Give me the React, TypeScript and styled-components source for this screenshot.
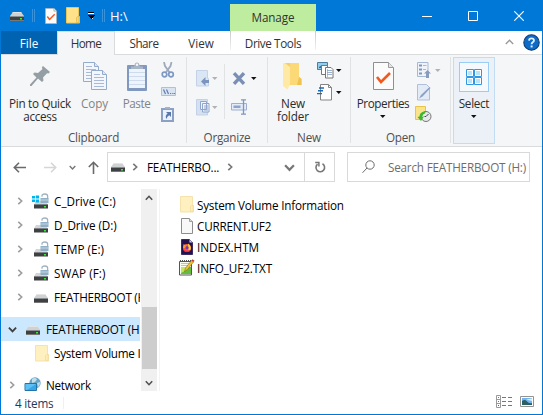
import React from 'react';
import styled, { createGlobalStyle, css } from 'styled-components';

const GlobalStyle = createGlobalStyle`
  * { box-sizing: border-box; }
  html, body { margin: 0; background: #fff; }
  body { width: 543px; height: 415px; overflow: hidden; }
  svg { display: block; flex: none; }
`;

/* ---------- shared parts ---------- */

const Window = styled.div`
  width: 543px;
  height: 415px;
  display: flex;
  flex-direction: column;
  border: 1px solid #0078d7;
  border-top: 0;
  background: #fff;
  color: #000;
  font-family: 'Open Sans', 'Noto Sans', sans-serif;
  font-size: 11.7px;
  white-space: nowrap;
  cursor: default;
`;

const Text = styled.span<{ $track?: number }>`
  display: block;
  flex: none;
  text-align: center;
  letter-spacing: ${p => p.$track ?? 0}px;
`;

/* ---------- title bar ---------- */

const TitleBar = styled.header`
  height: 31px;
  flex: none;
  display: flex;
  background: #0078d7;
  color: #fff;
`;

const QuickAccess = styled.div`
  width: 229px;
  height: 31px;
  display: flex;
  align-items: center;
  padding-left: 9px;
`;

const QuickItem = styled.div<{ $width: number }>`
  width: ${p => p.$width}px;
  display: flex;
  align-items: center;
`;

const QuickDivider = styled.i`
  width: 3px;
  height: 13px;
  border: 1px solid #3a92da;
  border-width: 0 1px;
  background: #1a6dba;
`;

const Caption = styled.span`
  font-size: 13px;
  line-height: 16px;
`;

const ContextTab = styled.div`
  width: 86px;
  height: 27px;
  margin-top: 4px;
  display: flex;
  justify-content: center;
  background: #bfed9f;
  color: #333;
  line-height: 27px;
`;

const WindowControls = styled.div`
  flex: 1;
  display: flex;
  justify-content: flex-end;
`;

const ControlButton = styled.button`
  width: 46px;
  height: 31px;
  padding: 0;
  border: 0;
  display: grid;
  place-items: center;
  background: none;
`;

/* ---------- ribbon tabs ---------- */

const TabRow = styled.nav`
  height: 24px;
  flex: none;
  display: flex;
  color: #333;
  box-shadow: inset 0 -1px #dadbdc;
`;

const Tab = styled.div<{ $width: number; $kind?: 'file' | 'active' | 'context' }>`
  width: ${p => p.$width}px;
  height: 24px;
  display: flex;
  justify-content: center;
  line-height: 24px;
  ${p => p.$kind === 'file' && css`
    height: 23px;
    background: #0063b1;
    color: #fff;
  `}
  ${p => p.$kind === 'active' && css`
    border: 1px solid #dadbdc;
    border-bottom: 0;
    line-height: 22px;
    background: #f5f6f7;
  `}
  ${p => p.$kind === 'context' && css`
    height: 19px;
    margin-left: 1px;
    border: 1px solid;
    border-width: 0 1px;
    border-image: linear-gradient(#c8c8c8, #f4f4f4) 1;
  `}
`;

const TabTools = styled.div`
  flex: 1;
  display: flex;
  justify-content: flex-end;
  align-items: center;
  gap: 9px;
  padding: 0 2px 2px 0;
`;

/* ---------- ribbon ---------- */

const Ribbon = styled.section`
  height: 92px;
  flex: none;
  display: flex;
  padding-top: 2px;
  border-bottom: 1px solid #dadbdc;
  background: #f5f6f7;
  color: #2b2b2b;
`;

const Group = styled.div<{ $width: number }>`
  width: ${p => p.$width}px;
  height: 86px;
  display: flex;
  flex-direction: column;
  border-right: 1px solid #e1e2e4;
`;

const GroupBody = styled.div<{ $pad: number }>`
  height: 73px;
  flex: none;
  display: flex;
  padding-left: ${p => p.$pad}px;
`;

const GroupLabel = styled.div`
  display: flex;
  justify-content: center;
  line-height: 14px;
  color: #505050;
`;

const BigButton = styled.div<{ $width: number; $disabled?: boolean }>`
  width: ${p => p.$width}px;
  display: flex;
  flex-direction: column;
  align-items: center;
  line-height: 13px;
  color: ${p => (p.$disabled ? '#838383' : '#2b2b2b')};
`;

const BigIcon = styled.div`
  height: 40px;
  display: flex;
  align-items: center;
  padding-bottom: 2px;
`;

const CaretSlot = styled.div`
  height: 13px;
  display: flex;
  align-items: center;
`;

const SmallColumn = styled.div<{ $left?: number; $top?: number; $gap?: number }>`
  display: flex;
  flex-direction: column;
  gap: ${p => p.$gap ?? 6}px;
  padding-top: ${p => p.$top ?? 5}px;
  margin-left: ${p => p.$left ?? 0}px;
`;

const SmallButton = styled.div`
  height: 16px;
  display: flex;
  align-items: center;
  gap: 2px;
`;

const InnerRule = styled.i`
  width: 1px;
  height: 55px;
  margin: 7px 6px 0 6px;
  background: #e1e2e4;
`;

const SelectGroup = styled.div`
  width: 42px;
  height: 87px;
  margin-left: 2px;
  display: flex;
  flex-direction: column;
  align-items: center;
  border: 1px solid #c2dcf3;
  padding-top: 4px;
  background: #ebf1f6;
  line-height: 13px;
`;

const SelectTile = styled.div`
  width: 30px;
  height: 30px;
  margin-bottom: 5px;
  display: grid;
  place-items: center;
  border: 1px solid #99cdf5;
  background: #f5f9fc;
`;

/* ---------- navigation ---------- */

const NavBar = styled.div`
  height: 42px;
  flex: none;
  display: flex;
  padding-top: 5px;
`;

const NavButtons = styled.div`
  width: 106px;
  height: 31px;
  display: flex;
  align-items: center;
  padding-left: 12px;
`;

const NavButton = styled.div<{ $width: number }>`
  width: ${p => p.$width}px;
`;

const AddressBox = styled.div`
  width: 228px;
  height: 30px;
  display: flex;
  align-items: center;
  border: 1px solid #d9d9d9;
  padding-left: 3px;
`;

const Crumb = styled.div<{ $width: number }>`
  width: ${p => p.$width}px;
  display: flex;
  align-items: center;
`;

const RefreshCell = styled.div`
  flex: 1;
  height: 28px;
  display: grid;
  place-items: center;
  border-left: 1px solid #d9d9d9;
`;

const SearchBox = styled.div`
  width: 183px;
  height: 30px;
  margin-left: 12px;
  display: flex;
  align-items: center;
  gap: 13px;
  padding-left: 14px;
  border: 1px solid #d9d9d9;
  color: #6d6d6d;
`;

/* ---------- content ---------- */

const Content = styled.main`
  height: 202px;
  flex: none;
  display: flex;
`;

const Tree = styled.div`
  width: 139px;
  height: 202px;
  overflow: hidden;
  display: flex;
  flex-direction: column;
`;

const TreeRow = styled.div<{ $level: number; $gapTop?: boolean; $selected?: boolean }>`
  height: 24px;
  flex: none;
  display: flex;
  align-items: center;
  margin-top: ${p => (p.$gapTop ? 8 : 0)}px;
  padding-left: ${p => p.$level * 8 - 2}px;
  background: ${p => (p.$selected ? '#cce8ff' : 'transparent')};
`;

const Twisty = styled.div`
  width: 10px;
  flex: none;
  display: flex;
  justify-content: center;
`;

const TreeIcon = styled.div`
  width: 18px;
  flex: none;
  margin: 0 4px 0 7px;
`;

const ScrollBar = styled.div`
  width: 16px;
  margin-left: 1px;
  display: flex;
  flex-direction: column;
  align-items: center;
  background: #f0f0f0;
`;

const ScrollArrow = styled.div`
  height: 17px;
  display: grid;
  place-items: center;
`;

const ScrollThumb = styled.div`
  width: 15px;
  height: 62px;
  margin: 101px 0 5px;
  background: #cdcdcd;
`;

const FileList = styled.div`
  flex: 1;
  margin-left: 2px;
  border-left: 1px solid #f3f3f3;
  padding: 5px 0 0 19px;
`;

const FileRow = styled.div`
  height: 21px;
  display: flex;
  align-items: center;
  gap: 2px;
`;

const FileIconSlot = styled.div`
  width: 16px;
  display: flex;
  justify-content: center;
`;

/* ---------- status bar ---------- */

const StatusBar = styled.footer`
  flex: 1;
  display: flex;
  align-items: center;
  justify-content: space-between;
  padding: 0 8px 0 14px;
`;

const StatusCount = styled.div`
  width: 49px;
  display: flex;
  border-right: 1px solid #f0f0f0;
  line-height: 12px;
  color: #1e395b;
`;

const ViewModes = styled.div`
  display: flex;
  align-items: center;
  gap: 7px;
  padding-bottom: 2px;
`;

/* ---------- icons ---------- */

const Drive = ({ bodyY = 4, led = '#3de63d' }: { bodyY?: number; led?: string }) => (
  <g transform={`translate(0 ${bodyY})`}>
    <path d="M3 0h8l3 4H0z" fill="#cfd1d3" />
    <path d="M3 0h8l.7 1H2.3z" fill="#e4e4e4" />
    <path d="M0 4h14v4.5H0z" fill="#3e4142" />
    <path d="M0 4h14v1H0z" fill="#8b8e90" />
    <path d="M0 8h14v1H0z" fill="#777" />
    <path d="M10 6h2v1.5h-2z" fill={led} />
  </g>
);

const DriveIcon = () => (
  <svg width="16" height="16"><Drive /></svg>
);

const TreeDriveIcon = ({ led }: { led?: string }) => (
  <svg width="18" height="16"><g transform="translate(2 0)"><Drive bodyY={5} led={led} /></g></svg>
);

const UnlockedDriveIcon = ({ system }: { system?: boolean }) => (
  <svg width="18" height="17" viewBox="0 0 18 17">
    <path d="M4 8h9l3 3.500H2z" fill="#d3d5d6" />
    <path d="M2 11h14v4.500H2z" fill="#3e4142" />
    <path d="M2 11h14v1H2z" fill="#808486" />
    <path d="M12 13h2v1.500h-2z" fill="#3de63d" />
    {system && (
      <path d="M0 3h3v2.600H0zM3.700 2.500h3.300v3.100H3.700zM0 6.400h3V9H0zM3.700 6.400h3.300v3.200H3.700z" fill="#00b5ee" />
    )}
    <path d="M10 3.800V3Q10 1 12.800 1t2.800 2v3" fill="none" stroke="#9fb1bd" strokeWidth="1.300" />
    <path d="M8.500 5h8v5h-8z" fill="#8fb0c6" />
    <path d="M8.500 6.500h8v1h-8z" fill="#c5d6e0" />
  </svg>
);

const FolderIcon = ({ faded }: { faded?: boolean }) => (
  <svg width="14" height="17" viewBox="0 0 14 17">
    <path d="M.5.5h12v9h1v6.500H.5z" fill={faded ? '#fff0c0' : '#ffe28a'} stroke={faded ? '#f5e3ab' : '#e9c65c'} />
    <path d="M10.500 15.500v-5l1-1h1.500v6z" fill={faded ? '#ffeeb8' : '#f7d774'} stroke={faded ? '#efdca0' : '#dfba4c'} strokeWidth=".8" />
  </svg>
);

const CheckDocIcon = ({ width = 12, height = 16 }: { width?: number; height?: number }) => (
  <svg width={width} height={height} viewBox="0 0 21 28" preserveAspectRatio="none">
    <path d="M.5.5h15l5 5v22H.5z" fill="#fbfbfb" stroke="#8f8f8f" />
    <path d="M15.500.5v5h5" fill="#e6e6e6" stroke="#9b9b9b" />
    <path d="M4 15l4 5 9-9" fill="none" stroke="#f4581c" strokeWidth="2.6" />
  </svg>
);

const CustomizeIcon = () => (
  <svg width="8" height="7" viewBox="0 0 8 7" shapeRendering="crispEdges">
    <path d="M1 0h6v1H1z" fill="#000" /><path d="M1 1h6v1H1z" fill="#fff" />
    <path d="M0 3h8L4 7z" fill="#000" /><path d="M5 6h2L5 7z" fill="#d8e8f7" />
  </svg>
);

const Caret = ({ faded }: { faded?: boolean }) => (
  <svg width="6" height="3" viewBox="0 0 6 3"><path d="M0 0h5.500L2.750 3z" fill={faded ? '#b2b2b2' : '#111'} /></svg>
);

const MinimizeIcon = () => (
  <svg width="10" height="10"><path d="M0 5.500h10" stroke="#fff" /></svg>
);
const MaximizeIcon = () => (
  <svg width="10" height="10"><path d="M.5.5h9v9h-9z" fill="none" stroke="#fff" /></svg>
);
const CloseIcon = () => (
  <svg width="10" height="10"><path d="M.3.3l9.400 9.400M9.700.3L.3 9.700" stroke="#fff" strokeWidth="1.1" /></svg>
);

const CollapseIcon = () => (
  <svg width="9" height="6"><path d="M.8 5l3.700-3.700L8.200 5" fill="none" stroke="#9a9a9a" strokeWidth="1.4" /></svg>
);

const HelpIcon = () => (
  <svg width="17" height="17" viewBox="0 0 17 17">
    <circle cx="8.500" cy="8.500" r="7.700" fill="#0f6bc8" stroke="#123f72" strokeWidth="1.1" />
    <path d="M6 6.600Q6.100 4.400 8.500 4.400T11 6.500Q11 7.600 9.500 8.400 8.600 9 8.600 10.200" fill="none" stroke="#e4f0fb" strokeWidth="1.8" />
    <path d="M7.600 11.500h2v1.900h-2z" fill="#e4f0fb" />
  </svg>
);

const PinIcon = () => (
  <svg width="20" height="20" viewBox="0 0 20 20">
    <path d="M13 0l7 6-1.500 1.500-1.500-.2-4 4.200.5 3-1.500 1.500-4-3.500L1.500 20H0v-1.500l6.500-7L3 8l1.500-1.500 3.500.5 4.500-4-.7-1.500z" fill="#949ea5" />
  </svg>
);

const CopyIcon = () => (
  <svg width="24" height="28" viewBox="0 0 24 28">
    {[[0, 0], [8, 8]].map(([x, y]) => (
      <g key={x} transform={`translate(${x} ${y})`}>
        <path d="M.5.5h11l4 4v15H.5z" fill="#f3f7fc" stroke="#94abcc" />
        <path d="M11.500.5v4h4" fill="#dde7f4" stroke="#94abcc" />
        <path d="M3 4.500h6M3 7.500h10M3 10.500h10M3 13.500h10M3 16.500h10" stroke="#a8bad5" />
      </g>
    ))}
  </svg>
);

const PasteIcon = () => (
  <svg width="20" height="29" viewBox="0 0 20 29">
    <rect y="3" width="20" height="26" rx="1" fill="#8198bf" />
    <path d="M2 7h16v19H2z" fill="#eef4fc" />
    <path d="M2 10.500h16M2 14.500h16M2 18.500h16M2 22.500h16" stroke="#cddbed" />
    <path d="M4 7V4.500h3L8 1.500Q10-.6 12 1.500l1 3h3V7z" fill="#a9b6c6" />
    <circle cx="10" cy="2.800" r="1.200" fill="#f5f6f7" />
  </svg>
);

const CutIcon = () => (
  <svg width="14" height="16" viewBox="0 0 14 16" fill="none">
    <path d="M3 0l1 4 5 7M10.500 0l-1 4-5 7" stroke="#9daabd" strokeWidth="1.8" />
    <circle cx="3.500" cy="12.500" r="2.300" stroke="#7f98c4" strokeWidth="1.7" />
    <circle cx="10" cy="12.500" r="2.300" stroke="#7f98c4" strokeWidth="1.7" />
  </svg>
);

const CopyPathIcon = () => (
  <svg width="16" height="10" viewBox="0 0 16 10">
    <path d="M.5.5h14v8H.5z" fill="#d9e4f3" stroke="#b0c0da" />
    <path d="M2.500 2.500l2 4.500M5.500 2.500l2 4.500M9 6.500h1.200M11.300 6.500h1.200M13 6.500h1" stroke="#5f7cab" strokeWidth="1.2" />
  </svg>
);

const PasteShortcutIcon = () => (
  <svg width="14" height="16" viewBox="0 0 14 16">
    <path d="M0 2h13v14H0z" fill="#8aa0c5" />
    <path d="M2 4h9v10H2z" fill="#eaf1fa" />
    <path d="M4 3V1h5v2z" fill="#a3b2c8" />
    <path d="M5 6h5v5L8.300 9.300Q6 10.500 5.500 13 3.500 10 6.600 7.600z" fill="#5878ac" />
  </svg>
);

const MoveToIcon = () => (
  <svg width="14" height="17" viewBox="0 0 14 17">
    <path d="M.5.500h11v8h1v7.500H.5z" fill="#dbe6f4" stroke="#c4d2e7" />
    <path d="M5 11.500L9.500 7v3H13v3H9.500v3z" fill="#7b95bf" />
  </svg>
);

const CopyToIcon = () => (
  <svg width="14" height="17" viewBox="0 0 14 17">
    <path d="M.5.500h11v15.500H.5z" fill="#d5e1f1" stroke="#c4d2e7" />
    <path d="M4.500 2.500h6v8h-6zM6.500 4.500h6.500v8.500H6.500z" fill="#f2f6fc" stroke="#8fa5cb" />
    <path d="M8 7h4M8 9h4M8 11h4" stroke="#8fa5cb" />
  </svg>
);

const DeleteIcon = () => (
  <svg width="18" height="13" viewBox="0 0 18 13">
    <path d="M3 1.200l10 10.600M13 1.200L3 11.800" stroke="#798fb5" strokeWidth="3.400" />
  </svg>
);

const RenameIcon = () => (
  <svg width="17" height="16" viewBox="0 0 17 16" fill="none">
    <path d="M.5 4.500h15v6.500H.5z" fill="#e4ecf8" stroke="#9db0d0" />
    <path d="M2.500 6.500h7v2.500h-7z" fill="#8da4cb" />
    <path d="M10 .8h5M12.500 1v14M10 15.200h5" stroke="#7f97bf" strokeWidth="1.3" />
  </svg>
);

const NewFolderIcon = () => (
  <svg width="20" height="28" viewBox="0 0 20 28">
    <path d="M2 1h14v14l2.500 2v6H2z" fill="#f6cf62" />
    <path d="M7 1h9v22H7z" fill="#fbd976" />
    <path d="M0 1h2l5 4v17l-2.500 5.500L0 24z" fill="#ffe9a4" />
    <path d="M16 15l2.500 2v6H14z" fill="#efc350" />
  </svg>
);

const NewItemIcon = () => (
  <svg width="17" height="17" viewBox="0 0 17 17">
    <path d="M.5.500h10v7H.5z" fill="#91cdec" stroke="#4b7d9f" />
    <path d="M2 5l3-2 3 3H2z" fill="#2e6d91" />
    <path d="M4.500 3.500h6v9h-6z" fill="#fff" stroke="#777" />
    <path d="M8.500 5.500h5.500l2 2v8.500H8.500z" fill="#fff" stroke="#777" />
    <path d="M10 8.500h5M10 10.500h5M10 12.500h5" stroke="#9bb2d4" />
    <path d="M10.500 7v8" stroke="#e08a8a" strokeWidth=".7" />
  </svg>
);

const EasyAccessIcon = () => (
  <svg width="17" height="17" viewBox="0 0 17 17">
    <path d="M3.500.500h8l3 3v12.500h-11z" fill="#fff" stroke="#858585" />
    <path d="M11.500.500v3h3" fill="none" stroke="#858585" />
    <path d="M2 4h5M1 6.800h5M0 9.600h5" stroke="#1c6bb8" strokeWidth="1.4" />
  </svg>
);

const OpenWithIcon = () => (
  <svg width="18" height="17" viewBox="0 0 18 17">
    <path d="M2.500.500h10.500v14H2.500z" fill="#f0f4fa" stroke="#a7b8d4" />
    <path d="M4 2.500h3v2H4zM4 6.500h3v2H4zM4 10.500h3v2H4z" fill="#7e97c0" />
    <path d="M8 3.500h3.500M8 7.500h3" stroke="#a7b8d4" />
    <path d="M9 11.500L12.500 8 16 11.500h-2V16h-3v-4.500z" fill="#8a9cbd" />
  </svg>
);

const EditIcon = () => (
  <svg width="17" height="17" viewBox="0 0 17 17">
    <path d="M2.500.500h9l3 3v12.500h-12z" fill="#e3ebf6" stroke="#b1c0d9" />
    <path d="M4 14.500L6 11l8.500-8 1 1-8 8.500z" fill="#8ba2c7" />
  </svg>
);

const HistoryIcon = () => (
  <svg width="17" height="17" viewBox="0 0 17 17">
    <path d="M.5.500h10v13H.5z" fill="#fbe38c" stroke="#e6c44f" />
    <circle cx="11" cy="10.500" r="5" fill="#e7e9ea" stroke="#777" />
    <path d="M11 10.500l2.500-2.500M11 10.500h-1.500" stroke="#444" />
    <path d="M10 5.500Q4.500 6 4.500 10.500L2.500 11 6 15l3-4.500-2 .3Q7.500 8 10.500 7z" fill="#3fb62e" />
  </svg>
);

const SelectIcon = () => (
  <svg width="16" height="16" viewBox="0 0 16 16">
    {[[0, 0], [8, 0], [0, 8], [8, 8]].map(([x, y]) => (
      <g key={`${x}-${y}`} transform={`translate(${x} ${y})`}>
        <path d="M.5.500h7v7h-7z" fill="#fff" stroke="#2f97e4" />
        <path d="M2 2h4v4H2z" fill="#b7e3fb" />
      </g>
    ))}
  </svg>
);

const ArrowIcon = ({ turn = 0, color = '#6a6a6a' }: { turn?: number; color?: string }) => (
  <svg width="13" height="13" viewBox="0 0 13 13">
    <path d="M6 1.800L1.300 6.500 6 11.200M1.300 6.500H13" fill="none" stroke={color} strokeWidth="1.6" transform={`rotate(${turn} 6.500 6.500)`} />
  </svg>
);

const Chevron = ({ turn = 0, size = 8, color = '#777', weight = 1.6 }: { turn?: number; size?: number; color?: string; weight?: number }) => (
  <svg width={size} height={size} viewBox="0 0 8 8">
    <path d="M2.300.800L5.700 4 2.300 7.200" fill="none" stroke={color} strokeWidth={weight} transform={`rotate(${turn} 4 4)`} />
  </svg>
);

const RefreshIcon = () => (
  <svg width="12" height="13" viewBox="0 0 12 13" fill="none">
    <path d="M8.500 2.800A4.300 4.300 0 1 1 3.500 3.200" stroke="#777" strokeWidth="1.600" />
    <path d="M1.200 1.600h3.700V5.500" stroke="#777" strokeWidth="1.500" />
  </svg>
);

const SearchIcon = () => (
  <svg width="13" height="14" viewBox="0 0 13 14" fill="none">
    <circle cx="8" cy="5" r="4.200" stroke="#6d6d6d" />
    <path d="M5 8L.5 12.800" stroke="#6d6d6d" />
  </svg>
);

const BlankFileIcon = () => (
  <svg width="14" height="16" viewBox="0 0 14 16">
    <path d="M1.500.500h8l3 3v12h-11z" fill="#f8f8f8" stroke="#8d8d8d" />
    <path d="M9.500.500v3h3" fill="#ddd" stroke="#a0a0a0" />
  </svg>
);

const FirefoxFileIcon = () => (
  <svg width="14" height="16" viewBox="0 0 14 16">
    <path d="M1.500.500h8l3 3v12h-11z" fill="#24124f" stroke="#3a2a66" />
    <path d="M9.500.500v3h3z" fill="#d3cfe0" />
    <circle cx="7" cy="9" r="4" fill="#ff5a2a" />
    <path d="M3 9L3.600 5 5.500 6.500 7.500 7 6 9z" fill="#ff9a22" />
    <path d="M8 4.500Q11.500 7 10.700 10.500L8.500 11.500z" fill="#ffd23a" />
    <circle cx="7" cy="8.700" r="1.600" fill="#7a33c0" />
    <path d="M3.500 10.500Q7 13 10.500 10.500 9.500 13 7 13T3.500 10.500z" fill="#ee2c55" />
  </svg>
);

const TextFileIcon = () => (
  <svg width="16" height="17" viewBox="0 0 16 17">
    <path d="M.5 2.500h12v13.500H.5z" fill="#f8fbef" stroke="#555" />
    <path d="M1 2h12" stroke="#555" strokeWidth="2.200" strokeDasharray="1 1" />
    <path d="M2 4.500h9M2 6.500h8" stroke="#b9c9a0" />
    <path d="M2 8h10v7H2z" fill="#63bc3a" />
    <path d="M2 8h7l-3 4-4 2z" fill="#c3e65e" />
    <path d="M5.500 12.500l1-3.500 6-7.500 2 1.500-6 7.500z" fill="#f2c230" stroke="#7a5a15" strokeWidth=".5" />
    <path d="M12.500 1.500l1-1.200 2 1.500-1 1.200z" fill="#c8352a" />
  </svg>
);

const NetworkIcon = () => (
  <svg width="18" height="16" viewBox="0 0 18 16">
    <circle cx="11" cy="6" r="5.700" fill="#6ba6c8" />
    <path d="M8 2q3-2 5 .5L11 5 8 6zM13 6l3-1q.5 3-2 5z" fill="#c1dde8" />
    <path d="M1 6.500h11.500v7H1z" fill="#36a8ea" stroke="#2473a8" />
    <path d="M1.500 7h10.500l-9 6H1.500z" fill="#5ec1f5" />
    <path d="M4 14.500h6" stroke="#3a7396" />
  </svg>
);

const DetailsViewIcon = () => (
  <svg width="17" height="13" viewBox="0 0 17 13">
    <path d="M.5.500h4v12h-4zM.5 4.500h4M.5 8.500h4" fill="#fff" stroke="#999" />
    <path d="M2 2h1v1H2z" fill="#3a9a5b" /><path d="M2 6h1v1H2z" fill="#3988d8" /><path d="M2 10h1v1H2z" fill="#c3335b" />
    <path d="M6 2.500h4M12 2.500h4M6 6.500h4M12 6.500h4M6 10.500h4M12 10.500h4" stroke="#777" />
  </svg>
);

const ThumbViewIcon = () => (
  <svg width="14" height="11" viewBox="0 0 14 11">
    <path d="M.5.500h13v10H.5z" fill="#fff" stroke="#929292" />
    <path d="M2 2h10v7H2z" fill="#72b4ef" />
    <path d="M2 5q3-2 5 .5T12 7v2H2z" fill="#2b5f64" />
    <path d="M6 3.500l6-1v2.500z" fill="#d8effc" />
  </svg>
);

/* ---------- data ---------- */

const drives = [
  { name: 'C_Drive (C:)', track: 0.02, icon: <UnlockedDriveIcon system /> },
  { name: 'D_Drive (D:)', track: -0.1, icon: <UnlockedDriveIcon /> },
  { name: 'TEMP (E:)', track: 0, icon: <UnlockedDriveIcon /> },
  { name: 'SWAP (F:)', track: 0.1, icon: <UnlockedDriveIcon /> },
  { name: 'FEATHERBOOT (H:)', track: -0.3, icon: <TreeDriveIcon led="#3e4142" /> },
];

const files = [
  { name: 'System Volume Information', track: -0.2, icon: <FolderIcon faded /> },
  { name: 'CURRENT.UF2', track: -0.2, icon: <BlankFileIcon /> },
  { name: 'INDEX.HTM', track: -0.05, icon: <FirefoxFileIcon /> },
  { name: 'INFO_UF2.TXT', track: -0.1, icon: <TextFileIcon /> },
];

/* ---------- app ---------- */

export default function App() {
  return (
    <>
      <GlobalStyle />
      <Window>
        <TitleBar>
          <QuickAccess>
            <QuickItem $width={22}><DriveIcon /></QuickItem>
            <QuickItem $width={13}><QuickDivider /></QuickItem>
            <QuickItem $width={21}><CheckDocIcon /></QuickItem>
            <QuickItem $width={21}><FolderIcon /></QuickItem>
            <QuickItem $width={15}><CustomizeIcon /></QuickItem>
            <QuickItem $width={8}><QuickDivider /></QuickItem>
            <Caption>H:\</Caption>
          </QuickAccess>
          <ContextTab><Text $track={-0.1}>Manage</Text></ContextTab>
          <WindowControls>
            <ControlButton><MinimizeIcon /></ControlButton>
            <ControlButton><MaximizeIcon /></ControlButton>
            <ControlButton><CloseIcon /></ControlButton>
          </WindowControls>
        </TitleBar>

        <TabRow>
          <Tab $width={56} $kind="file"><Text>File</Text></Tab>
          <Tab $width={58} $kind="active"><Text $track={-0.6}>Home</Text></Tab>
          <Tab $width={58}><Text $track={-0.5}>Share</Text></Tab>
          <Tab $width={56}><Text>View</Text></Tab>
          <Tab $width={86} $kind="context"><Text $track={-0.4}>Drive Tools</Text></Tab>
          <TabTools><CollapseIcon /><HelpIcon /></TabTools>
        </TabRow>

        <Ribbon>
          <Group $width={186}>
            <GroupBody $pad={7}>
              <BigButton $width={64}>
                <BigIcon><PinIcon /></BigIcon>
                <Text $track={-0.3}>Pin to Quick<br />access</Text>
              </BigButton>
              <BigButton $width={45} $disabled>
                <BigIcon><CopyIcon /></BigIcon>
                <Text $track={-0.1}>Copy</Text>
              </BigButton>
              <BigButton $width={39} $disabled>
                <BigIcon><PasteIcon /></BigIcon>
                <Text $track={-0.45}>Paste</Text>
              </BigButton>
              <SmallColumn $left={5}>
                <SmallButton><CutIcon /></SmallButton>
                <SmallButton><CopyPathIcon /></SmallButton>
                <SmallButton><PasteShortcutIcon /></SmallButton>
              </SmallColumn>
            </GroupBody>
            <GroupLabel><Text $track={-0.2}>Clipboard</Text></GroupLabel>
          </Group>

          <Group $width={81}>
            <GroupBody $pad={9}>
              <SmallColumn $top={13} $gap={13}>
                <SmallButton><MoveToIcon /><Caret faded /></SmallButton>
                <SmallButton><CopyToIcon /><Caret faded /></SmallButton>
              </SmallColumn>
              <InnerRule />
              <SmallColumn $top={13} $gap={13}>
                <SmallButton><DeleteIcon /><Caret /></SmallButton>
                <SmallButton><RenameIcon /></SmallButton>
              </SmallColumn>
            </GroupBody>
            <GroupLabel><Text $track={-0.25}>Organize</Text></GroupLabel>
          </Group>

          <Group $width={83}>
            <GroupBody $pad={3}>
              <BigButton $width={44}>
                <BigIcon><NewFolderIcon /></BigIcon>
                <Text $track={-0.1}>New<br />folder</Text>
              </BigButton>
              <SmallColumn $left={2}>
                <SmallButton><NewItemIcon /><Caret /></SmallButton>
                <SmallButton><EasyAccessIcon /><Caret /></SmallButton>
              </SmallColumn>
            </GroupBody>
            <GroupLabel><Text $track={-0.1}>New</Text></GroupLabel>
          </Group>

          <Group $width={100}>
            <GroupBody $pad={3}>
              <BigButton $width={58}>
                <BigIcon><CheckDocIcon width={21} height={28} /></BigIcon>
                <Text $track={-0.4}>Properties</Text>
                <CaretSlot><Caret /></CaretSlot>
              </BigButton>
              <SmallColumn $left={3}>
                <SmallButton><OpenWithIcon /><Caret faded /></SmallButton>
                <SmallButton><EditIcon /></SmallButton>
                <SmallButton><HistoryIcon /></SmallButton>
              </SmallColumn>
            </GroupBody>
            <GroupLabel><Text $track={-0.25}>Open</Text></GroupLabel>
          </Group>

          <SelectGroup>
            <SelectTile><SelectIcon /></SelectTile>
            <Text $track={-0.3}>Select</Text>
            <CaretSlot><Caret /></CaretSlot>
          </SelectGroup>
        </Ribbon>

        <NavBar>
          <NavButtons>
            <NavButton $width={31}><ArrowIcon /></NavButton>
            <NavButton $width={25}><ArrowIcon turn={180} color="#d6d6d6" /></NavButton>
            <NavButton $width={18}><Chevron turn={90} size={7} /></NavButton>
            <NavButton $width={13}><ArrowIcon turn={90} /></NavButton>
          </NavButtons>
          <AddressBox>
            <Crumb $width={20}><DriveIcon /></Crumb>
            <Crumb $width={16}><Chevron /></Crumb>
            <Crumb $width={79}><Text $track={-0.2}>FEATHERBO...</Text></Crumb>
            <Crumb $width={58}><Chevron /></Crumb>
            <Crumb $width={20}><Chevron turn={90} size={11} /></Crumb>
            <RefreshCell><RefreshIcon /></RefreshCell>
          </AddressBox>
          <SearchBox>
            <SearchIcon />
            <Text $track={-0.2}>Search FEATHERBOOT (H:)</Text>
          </SearchBox>
        </NavBar>

        <Content>
          <Tree>
            {drives.map(d => (
              <TreeRow key={d.name} $level={2}>
                <Twisty><Chevron color="#9d9d9d" /></Twisty>
                <TreeIcon>{d.icon}</TreeIcon>
                <Text $track={d.track}>{d.name}</Text>
              </TreeRow>
            ))}
            <TreeRow $level={1} $gapTop $selected>
              <Twisty><Chevron turn={90} size={9} color="#404040" /></Twisty>
              <TreeIcon><TreeDriveIcon /></TreeIcon>
              <Text $track={-0.18}>FEATHERBOOT (H:)</Text>
            </TreeRow>
            <TreeRow $level={2}>
              <Twisty />
              <TreeIcon><svg width="18" height="17"><g transform="translate(3 0)"><FolderIcon faded /></g></svg></TreeIcon>
              <Text $track={-0.25}>System Volume Information</Text>
            </TreeRow>
            <TreeRow $level={1} $gapTop>
              <Twisty><Chevron color="#9d9d9d" /></Twisty>
              <TreeIcon><NetworkIcon /></TreeIcon>
              <Text $track={-0.25}>Network</Text>
            </TreeRow>
          </Tree>
          <ScrollBar>
            <ScrollArrow><Chevron turn={-90} color="#505050" /></ScrollArrow>
            <ScrollThumb />
            <ScrollArrow><Chevron turn={90} color="#505050" /></ScrollArrow>
          </ScrollBar>
          <FileList>
            {files.map(f => (
              <FileRow key={f.name}>
                <FileIconSlot>{f.icon}</FileIconSlot>
                <Text $track={f.track}>{f.name}</Text>
              </FileRow>
            ))}
          </FileList>
        </Content>

        <StatusBar>
          <StatusCount><Text $track={-0.2}>4 items</Text></StatusCount>
          <ViewModes><DetailsViewIcon /><ThumbViewIcon /></ViewModes>
        </StatusBar>
      </Window>
    </>
  );
}
